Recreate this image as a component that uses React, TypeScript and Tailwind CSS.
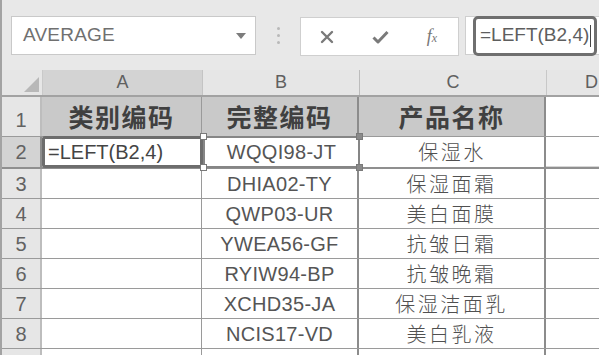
import React from "react";

const ROWS = [
  { n: 3, code: "DHIA02-TY", name: "保湿面霜" },
  { n: 4, code: "QWP03-UR", name: "美白面膜" },
  { n: 5, code: "YWEA56-GF", name: "抗皱日霜" },
  { n: 6, code: "RYIW94-BP", name: "抗皱晚霜" },
  { n: 7, code: "XCHD35-JA", name: "保湿洁面乳" },
  { n: 8, code: "NCIS17-VD", name: "美白乳液" },
];

const latin = "font-['Liberation_Sans','Noto_Sans_CJK_SC',sans-serif]";
const cjk = "font-['Noto_Sans_CJK_SC','Liberation_Sans',sans-serif]";

function Handle({ className }: { className: string }) {
  return <span className={`absolute h-[7px] w-[7px] border border-[#7a7a7a] ${className}`} />;
}

function FormulaBar() {
  return (
    <div className="flex h-[70px] items-start bg-[#e8e8e8] pt-[16px]">
      <div className="ml-[9px] flex h-[39px] w-[245px] items-center justify-between border border-[#c9c9c9] bg-white pl-[11px] pr-[9px]">
        <span className={`${latin} text-[19px] tracking-[0.2px] text-[#707070]`}>AVERAGE</span>
        <svg width="10" height="6" viewBox="0 0 10 6">
          <path d="M0 0 L10 0 L5 6 Z" fill="#7c7c7c" />
        </svg>
      </div>
      <div className="flex h-[39px] w-[44px] flex-col items-center justify-center gap-[4px]">
        <span className="h-[3px] w-[3px] rounded-full bg-[#b9b9b9]" />
        <span className="h-[3px] w-[3px] rounded-full bg-[#b9b9b9]" />
        <span className="h-[3px] w-[3px] rounded-full bg-[#b9b9b9]" />
      </div>
      <div className="mt-px flex h-[39px] w-[159px] items-center border border-[#cfcfcf] bg-white">
        <div className="flex w-[52px] justify-center">
          <svg width="14" height="14" viewBox="0 0 14 14">
            <path d="M2 2 L12 12 M12 2 L2 12" stroke="#7a7a7a" strokeWidth="2.4" strokeLinecap="round" />
          </svg>
        </div>
        <div className="flex w-[54px] justify-center">
          <svg width="17" height="14" viewBox="0 0 17 14">
            <path d="M1.5 7.5 L6 12 L15.5 2" stroke="#7a7a7a" strokeWidth="3" fill="none" strokeLinejoin="round" />
          </svg>
        </div>
        <div className="flex w-[50px] justify-center">
          <span className="font-['Liberation_Serif',serif] text-[18px] italic text-[#777]">
            f<span className="text-[12px]">x</span>
          </span>
        </div>
      </div>
      <div className="ml-[6px] flex h-[39px] flex-1 items-center border-y border-l border-[#cfcfcf] bg-white pl-[7px]">
        <div className="flex h-[40px] w-[124px] items-center rounded-[5px] border-[3px] border-[#6f6f6f] pl-[4px]">
          <span className={`${latin} text-[19px] text-[#5e5e5e]`}>=LEFT(B2,4)</span>
          <span className="ml-[1px] h-[22px] w-px bg-[#444]" />
        </div>
      </div>
    </div>
  );
}

export default function App() {
  return (
    <div className="h-[355px] w-[599px] overflow-hidden border-l-2 border-[#a3a3a3] bg-white">
      <FormulaBar />

      {/* column headers */}
      <div className={`${latin} flex h-[27px] border-b-2 border-[#a2a2a2] text-[18px] text-[#606060]`}>
        <div className="relative w-[40px] bg-[#e6e6e6]">
          <svg className="absolute bottom-[3px] right-[3px]" width="15" height="15" viewBox="0 0 15 15">
            <path d="M15 0 L15 15 L0 15 Z" fill="#b8b8b8" />
          </svg>
        </div>
        <div className="flex w-[160px] items-center justify-center border-l border-[#c9c9c9] bg-[#d3d3d3]">A</div>
        <div className="flex w-[157px] items-center justify-center border-l border-[#c4c4c4] bg-[#e6e6e6]">B</div>
        <div className="flex w-[187px] items-center justify-center border-l border-[#bcbcbc] bg-[#e6e6e6]">C</div>
        <div className="flex flex-1 items-center justify-end border-l border-[#c8c8c8] bg-[#e6e6e6] pr-[1px]">
          <span>D</span>
        </div>
      </div>

      {/* row 1 */}
      <div className="flex h-[40px] border-b border-[#9a9a9a]">
        <div className={`${latin} flex w-[40px] items-end justify-center border-r-2 border-[#bdbdbd] bg-[#e6e6e6] pb-[1px] text-[20px] text-[#626262]`}>1</div>
        <div className={`${cjk} flex w-[160px] items-center justify-center border-r border-[#9a9a9a] bg-[#c9c9c9] text-[25px] font-bold tracking-[1.5px] text-[#404040]`}>类别编码</div>
        <div className={`${cjk} flex w-[157px] items-center justify-center border-r-2 border-[#8c8c8c] bg-[#c9c9c9] text-[25px] font-bold tracking-[1.5px] text-[#404040]`}>完整编码</div>
        <div className={`${cjk} flex w-[187px] items-center justify-center border-r-2 border-[#8c8c8c] bg-[#c9c9c9] text-[25px] font-bold tracking-[1.5px] text-[#404040]`}>产品名称</div>
        <div className="flex-1" />
      </div>

      {/* row 2 */}
      <div className="flex h-[32px] border-b-2 border-[#8f8f8f]">
        <div className={`${latin} flex w-[40px] items-center justify-center border-r-2 border-[#8d8d8d] bg-[#d3d3d3] text-[20px] text-[#626262]`}>2</div>
        <div className="relative -my-px flex w-[161px] items-center rounded-[3px] border-[3px] border-[#6d6d6d] bg-white pl-[3px]">
          <span className={`${latin} text-[20px] text-[#444]`}>=LEFT(B2,4)</span>
        </div>
        <div className="relative -my-px flex w-[157px] items-center justify-center border-2 border-[#868686]">
          <span className={`${latin} text-[20px] tracking-[0.3px] text-[#555]`}>WQQI98-JT</span>
          <Handle className="-left-[5px] -top-[5px] bg-white" />
          <Handle className="-right-[5px] -top-[5px] bg-[#8a8a8a]" />
          <Handle className="-bottom-[5px] -right-[5px] bg-[#8a8a8a]" />
          <Handle className="-bottom-[5px] -left-[5px] bg-white" />
        </div>
        <div className={`${cjk} flex w-[186px] items-center justify-center border-r-2 border-[#8c8c8c] text-[20px] font-light tracking-[2.5px] text-[#505050]`}>保湿水</div>
        <div className="flex-1 border-b border-[#d6d6d6]" />
      </div>

      {ROWS.map((r) => (
        <div key={r.n} className="flex h-[30px] border-b border-[#9a9a9a]">
          <div className={`${latin} flex w-[40px] items-center justify-center border-r-2 border-[#bdbdbd] bg-[#e6e6e6] text-[20px] text-[#626262]`}>{r.n}</div>
          <div className="w-[160px] border-r border-[#9a9a9a]" />
          <div className={`${latin} flex w-[157px] items-center justify-center border-r-2 border-[#8c8c8c] text-[20px] tracking-[0.3px] text-[#555]`}>{r.code}</div>
          <div className={`${cjk} flex w-[187px] items-center justify-center border-r-2 border-[#8c8c8c] text-[20px] font-light tracking-[2.5px] text-[#505050]`}>{r.name}</div>
          <div className="flex-1" />
        </div>
      ))}

      <div className="flex h-[10px]">
        <div className="w-[40px] border-r-2 border-[#bdbdbd] bg-[#e6e6e6]" />
        <div className="w-[160px] border-r border-[#9a9a9a]" />
        <div className="w-[157px] border-r-2 border-[#8c8c8c]" />
        <div className="w-[187px] border-r-2 border-[#8c8c8c]" />
        <div className="flex-1" />
      </div>
    </div>
  );
}
